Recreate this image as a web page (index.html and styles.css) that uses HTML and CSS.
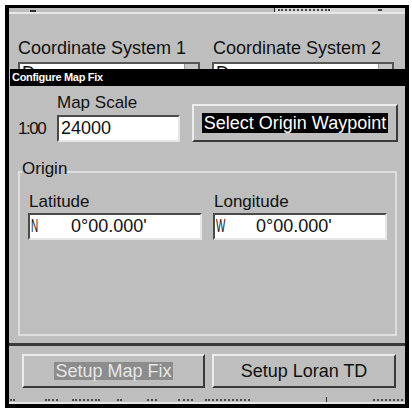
FILE: index.html
```html
<!DOCTYPE html>
<html lang="en">
<head>
    <meta charset="UTF-8">
    <title>Configure Map Fix</title>
    <link rel="stylesheet" href="styles.css">
</head>
<body>

<div class="screen">
    <div class="strip strip-top">
        <span class="tick"></span>
        <span class="strip-field">
            <span class="dots t1"></span>
            <span class="dots t2"></span>
        </span>
    </div>

    <div class="coord-labels">
        <span>Coordinate System 1</span>
        <span>Coordinate System 2</span>
    </div>
    <div class="coord-selects">
        <div class="select"><span>Degrees</span><i class="arrow"></i></div>
        <div class="select"><span>Degrees</span><i class="arrow"></i></div>
    </div>

    <div class="dialog">
        <div class="title">Configure Map Fix</div>
        <div class="dialog-body">
            <div class="scale-row">
                <div class="scale-col">
                    <div class="scale-label">Map Scale</div>
                    <div class="scale-input">
                        <span class="ratio">1:00</span>
                        <div class="field scale-field">24000</div>
                    </div>
                </div>
                <div class="btn btn-origin"><span class="focus">Select Origin Waypoint</span></div>
            </div>

            <fieldset class="origin">
                <legend>Origin</legend>
                <div class="coords">
                    <div class="coord">
                        <div class="coord-label">Latitude</div>
                        <div class="field"><span class="hemi"><i>N</i></span>0°00.000'</div>
                    </div>
                    <div class="coord">
                        <div class="coord-label">Longitude</div>
                        <div class="field"><span class="hemi"><i>W</i></span>0°00.000'</div>
                    </div>
                </div>
            </fieldset>
        </div>
    </div>

    <div class="setup-row">
        <div class="btn btn-setup"><span class="dim">Setup Map Fix</span></div>
        <div class="btn btn-setup">Setup Loran TD</div>
    </div>

    <div class="strip strip-bottom">
        <span class="dots b1"></span>
        <span class="dots b2"></span>
        <span class="dots b3"></span>
        <span class="dots b4"></span>
        <span class="dots b5"></span>
        <span class="dots b6"></span>
        <span class="dots b7"></span>
        <span class="mark"></span>
        <span class="dots b8"></span>
    </div>
</div>

</body>
</html>
```

FILE: styles.css
```css
body {
    margin: 0;
    background: #fff;
    font-family: "Liberation Sans", Arial, sans-serif;
    color: #111;
}
.screen {
    margin: 5px 0 0 5px;
    width: 396px;
    height: 396px;
    border: solid #000;
    border-width: 3px 4px 4px 4px;
    background: #bebebe;
    display: flex;
    flex-direction: column;
}

/* rows of the window underneath, cut off at the edges */
.strip {
    display: flex;
}
.strip-top {
    height: 4px;
    flex: none;
    border-bottom: 2px solid #e8e8e8;
}
.tick {
    width: 6px;
    height: 2px;
    margin: 2px 0 0 21px;
    background: #333;
}
.strip-field {
    display: flex;
    align-items: flex-end;
    margin-left: auto;
    width: 130px;
    background: #d6d6d6;
    border-left: 1px solid #222;
}
.dots {
    height: 0;
    border-top: 2px dotted #4a4a4a;
    margin-bottom: 1px;
}
.t1 { margin-left: 3px; width: 52px; }
.t2 { margin-left: 48px; width: 4px; }

.strip-bottom {
    flex: 1;
    align-items: flex-end;
    border-bottom: 2px solid #e6e6e6;
    padding-bottom: 1px;
}
.strip-bottom .dots { margin-bottom: 0; }
.b1 { margin-left: 1px; width: 3px; }
.b2 { margin-left: 32px; width: 13px; }
.b3 { margin-left: 14px; width: 28px; }
.b4 { margin-left: 17px; width: 3px; }
.b5 { margin-left: 27px; width: 10px; }
.b6 { margin-left: 21px; width: 15px; }
.b7 { margin-left: 12px; width: 45px; }
.b8 { margin-left: 46px; width: 30px; }
.mark {
    margin-left: 76px;
    width: 1px;
    height: 5px;
    margin-bottom: -1px;
    background: #333;
}

/* coordinate system selectors */
.coord-labels {
    display: grid;
    grid-template-columns: 195px 1fr;
    padding: 23px 0 0 9px;
    font-size: 18px;
    line-height: 22px;
}
.coord-selects {
    display: grid;
    grid-template-columns: 182px 182px;
    column-gap: 12px;
    padding-left: 9px;
    margin-top: 3px;
    height: 7px;
    overflow: hidden;
}
.select {
    display: flex;
    height: 7px;
    overflow: hidden;
    box-sizing: border-box;
    background: #fff;
    border-top: 2px solid #555;
    border-left: 2px solid #555;
    font-size: 18px;
    line-height: 19px;
    padding-left: 2px;
}
.select .arrow {
    margin-left: auto;
    width: 13px;
    background: #c8c8c8;
    border-left: 1px solid #999;
    border-right: 2px solid #555;
}

/* dialog */
.dialog {
    display: flex;
    flex-direction: column;
    border-bottom: 3px solid #3a3a3a;
}
.title {
    margin-left: 1px;
    height: 17px;
    padding-left: 2px;
    background: #000;
    color: #fff;
    font-size: 11px;
    font-weight: bold;
    line-height: 17px;
    letter-spacing: -0.3px;
}
.dialog-body {
    padding: 7px 7px 7px 9px;
}
.scale-row {
    display: flex;
    align-items: flex-end;
    column-gap: 12px;
}
.scale-label {
    margin-left: 39px;
    font-size: 17px;
    line-height: 20px;
}
.scale-input {
    display: flex;
    align-items: center;
    margin-top: 2px;
}
.ratio {
    width: 39px;
    font-size: 17px;
    letter-spacing: -1.5px;
}
.field {
    box-sizing: border-box;
    height: 27px;
    padding-left: 1px;
    background: #fff;
    border: 2px solid;
    border-color: #4a4a4a #e6e6e6 #e6e6e6 #4a4a4a;
    font-size: 18px;
    line-height: 23px;
    white-space: nowrap;
}
.scale-field {
    width: 123px;
    padding-left: 2px;
}
.btn {
    box-sizing: border-box;
    display: flex;
    align-items: center;
    justify-content: center;
    border: 2px solid;
    border-color: #ececec #3a3a3a #3a3a3a #ececec;
    font-size: 18px;
}
.btn-origin {
    width: 206px;
    height: 38px;
}
.focus {
    background: #000;
    color: #fff;
    line-height: 20px;
    padding: 0 2px;
}

.origin {
    margin: 17px 1px 0 0;
    padding: 7px 8px 94px 8px;
    border: 2px solid #dedede;
    min-width: 0;
}
.origin legend {
    margin-left: -6px;
    padding: 0 0 6px;
    font-size: 17px;
    line-height: 20px;
}
.coords {
    display: grid;
    grid-template-columns: 174px 174px;
    column-gap: 11px;
}
.coord-label {
    padding-left: 1px;
    font-size: 17px;
    line-height: 20px;
}
.coord .field {
    margin-top: 1px;
}
.hemi {
    display: inline-block;
    width: 40px;
}
.hemi i {
    display: inline-block;
    font-style: normal;
    transform: scaleX(0.55);
    transform-origin: left;
}

/* buttons of the window underneath */
.setup-row {
    display: flex;
    column-gap: 7px;
    padding: 8px 0 0 13px;
}
.btn-setup {
    width: 183px;
    height: 34px;
}
.setup-row .btn-setup:last-child {
    width: 184px;
}
.dim {
    background: #8c8c8c;
    color: #e6e6e6;
    line-height: 18px;
    padding: 0 1px;
}
```
